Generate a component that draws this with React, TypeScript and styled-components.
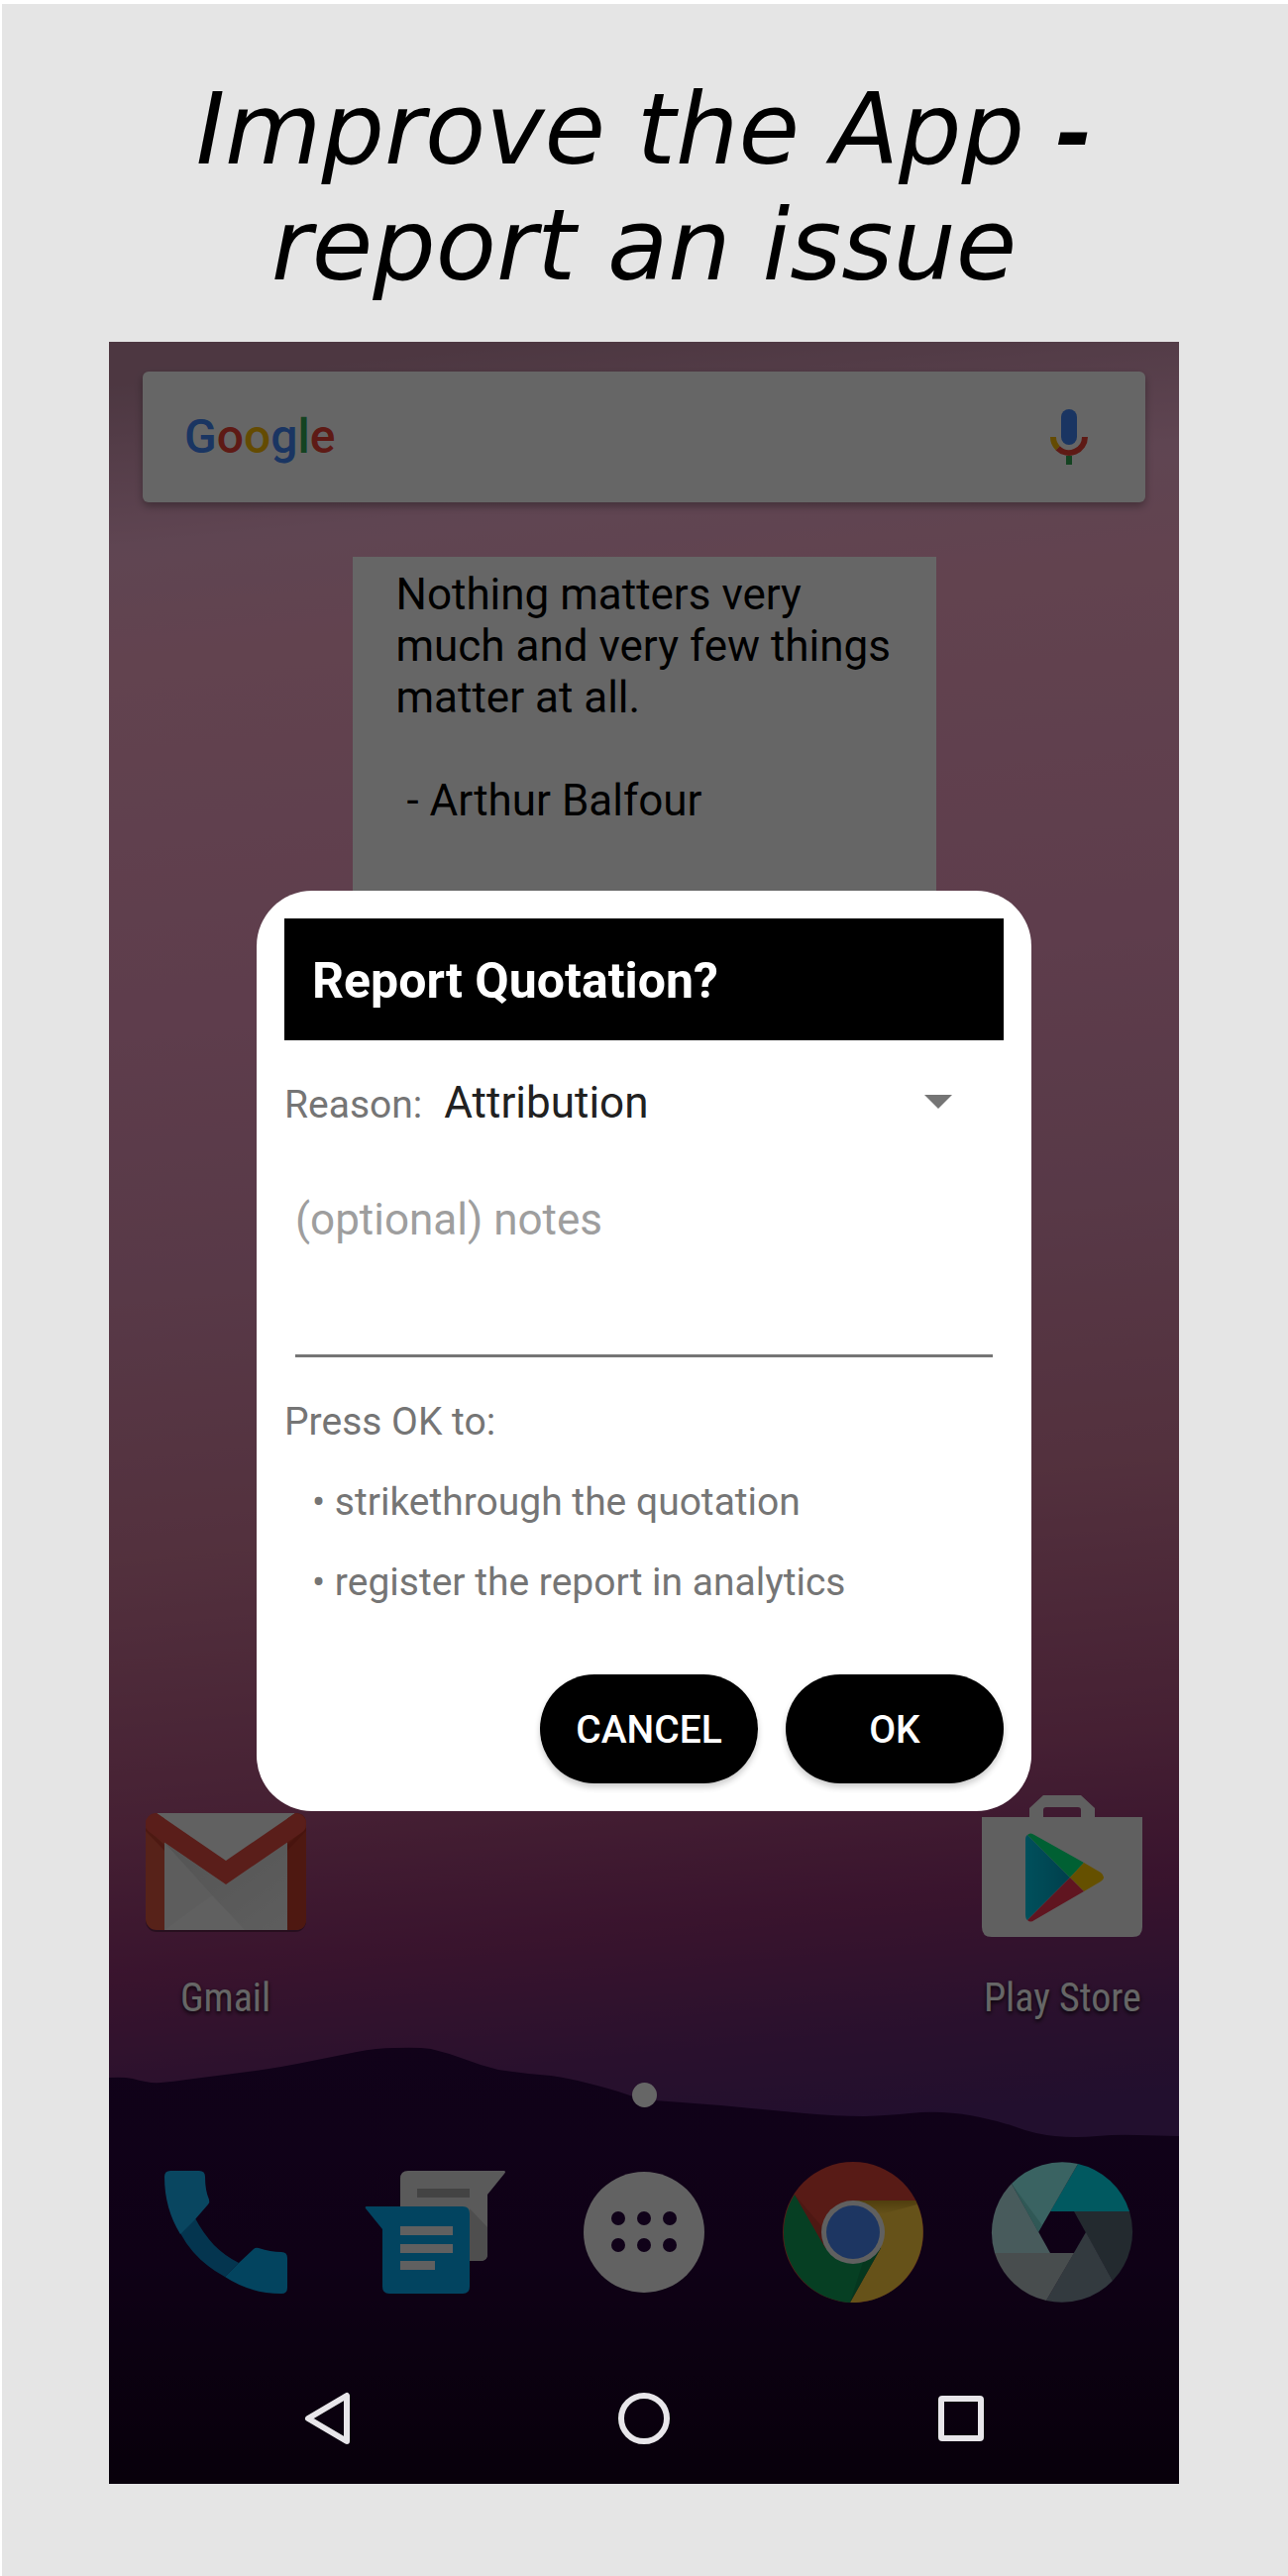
import React, { useState } from "react";
import styled, { createGlobalStyle } from "styled-components";

const GlobalStyle = createGlobalStyle`
  *, *::before, *::after { box-sizing: border-box; }
  body { margin: 0; font-family: Roboto, "Liberation Sans", sans-serif; background: #fff; }
  h1, h2, p, ul, figure, blockquote { margin: 0; padding: 0; }
  button, select, textarea { font: inherit; }
`;

const Page = styled.main`
  min-height: 100vh;
  padding: 68px 110px 93px 108px;
  border-top: 4px solid #fff;
  border-left: 2px solid #fff;
  background: #e5e5e5;
`;

const Headline = styled.h1`
  margin-bottom: 39px;
  color: #000;
  font: italic 400 100px/117px "DejaVu Sans", sans-serif;
  text-align: center;
`;

const Dash = styled.span`
  font-size: 88px;
  font-weight: 700;
  line-height: 1;
`;

const Phone = styled.section`
  position: relative;
  display: flex;
  flex-direction: column;
  width: 100%;
  aspect-ratio: 540 / 1081;
  overflow: hidden;
  background: #1b0426;
`;

const Wallpaper = styled.svg`
  position: absolute;
  inset: 0;
  width: 100%;
  height: 100%;
`;

const Home = styled.div`
  position: relative;
  flex: 1;
  display: flex;
  flex-direction: column;
  align-items: center;
  padding-top: 30px;
`;

const SearchBar = styled.div`
  align-self: stretch;
  display: flex;
  align-items: center;
  justify-content: space-between;
  height: 132px;
  margin: 0 34px;
  padding: 0 57px 0 42px;
  border-radius: 6px;
  background: #fff;
  box-shadow: 0 4px 8px rgba(0, 0, 0, 0.3);
`;

const BareButton = styled.button`
  display: flex;
  align-items: center;
  justify-content: center;
  padding: 0;
  border: 0;
  background: none;
  color: inherit;
  cursor: pointer;
`;

const Wordmark = styled(BareButton)`
  font-size: 48px;
  font-weight: 500;
  line-height: 56px;
`;

const Letter = styled.span<{ $color: string }>`
  color: ${(p) => p.$color};
`;

const QuoteWidget = styled.blockquote`
  width: 100%;
  max-width: 589px;
  min-height: 500px;
  margin-top: 55px;
  padding: 12px 44px;
  background: #fff;
  color: #000;
  font-size: 44px;
  line-height: 52px;
  white-space: pre-wrap;
`;

const AppRow = styled.div`
  align-self: stretch;
  display: grid;
  grid-template-columns: repeat(5, 1fr);
  justify-items: center;
  padding: 0 12px;
`;

const Shortcuts = styled(AppRow)`
  margin-top: auto;
`;

const Dock = styled(AppRow)`
  margin: 51px 0 53px;
`;

const Launcher = styled(BareButton)<{ $column?: number }>`
  flex-direction: column;
  gap: 37px;
  grid-column: ${(p) => p.$column ?? "auto"};
`;

const AppLabel = styled.span`
  color: #fff;
  font: 400 40px/48px "Roboto Condensed", "Liberation Sans Narrow", Roboto, sans-serif;
  white-space: nowrap;
  text-shadow: 0 2px 4px rgba(0, 0, 0, 0.9);
`;

const PageDot = styled.span`
  width: 25px;
  height: 25px;
  margin-top: 61px;
  border-radius: 50%;
  background: #fff;
`;

const NavBar = styled.nav`
  position: relative;
  z-index: 2;
  display: grid;
  grid-template-columns: repeat(3, 1fr);
  height: 126px;
  padding: 0 60px 6px;
`;

const Scrim = styled.div`
  position: absolute;
  inset: 0;
  z-index: 1;
  display: flex;
  align-items: center;
  justify-content: center;
  padding-bottom: 126px;
  background: rgba(0, 0, 0, 0.6);
`;

const Dialog = styled.form`
  width: 100%;
  max-width: 782px;
  padding: 28px;
  border-radius: 56px;
  background: #fff;
  color: #757575;
  font-size: 39px;
  line-height: 46px;
`;

const DialogTitle = styled.h2`
  padding: 34px 28px 30px;
  background: #000;
  color: #fff;
  font-size: 50px;
  font-weight: 700;
  line-height: 59px;
`;

const ReasonRow = styled.div`
  display: flex;
  align-items: baseline;
  gap: 22px;
  margin-top: 37px;
`;

const SelectBox = styled.div`
  position: relative;
  flex: 1;
`;

const ReasonSelect = styled.select`
  display: block;
  width: 100%;
  height: 52px;
  padding: 0;
  border: 0;
  appearance: none;
  background: none;
  color: #212121;
  font-size: 44px;
  line-height: 52px;
`;

const Caret = styled.svg`
  position: absolute;
  top: 18px;
  right: 52px;
  pointer-events: none;
`;

const NotesField = styled.div`
  display: flex;
  margin: 66px 11px 0;
`;

const Notes = styled.textarea`
  flex: 1;
  height: 165px;
  padding: 0;
  border: 0;
  border-bottom: 3px solid #757575;
  outline: 0;
  resize: none;
  background: none;
  color: #212121;
  font-size: 44px;
  line-height: 52px;
  &::placeholder { color: #9e9e9e; opacity: 1; }
`;

const Intro = styled.p`
  margin-top: 42px;
`;

const Effects = styled.ul`
  && { padding-left: 28px; }
  list-style: none;
`;

const Effect = styled.li`
  margin-top: 35px;
`;

const Actions = styled.div`
  display: flex;
  justify-content: flex-end;
  gap: 28px;
  margin-top: 70px;
`;

const Action = styled.button`
  width: 220px;
  height: 110px;
  padding: 2px 0 0;
  border: 0;
  border-radius: 55px;
  background: #000;
  color: #fff;
  font-weight: 500;
  box-shadow: 0 4px 6px rgba(0, 0, 0, 0.2);
  cursor: pointer;
`;

function Scenery() {
  return (
    <Wallpaper viewBox="0 0 1080 2162" preserveAspectRatio="none" aria-hidden="true">
      <defs>
        <linearGradient id="sky" gradientUnits="userSpaceOnUse" x1="450" y1="0" x2="630" y2="1810">
          <stop offset="0" stopColor="#c08ba4" />
          <stop offset="0.09" stopColor="#eeadcd" />
          <stop offset="0.15" stopColor="#f5a8c6" />
          <stop offset="0.35" stopColor="#eb99be" />
          <stop offset="0.5" stopColor="#dc8fb2" />
          <stop offset="0.65" stopColor="#cf7a9a" />
          <stop offset="0.8" stopColor="#ad5080" />
          <stop offset="0.88" stopColor="#8f3272" />
          <stop offset="0.95" stopColor="#682a70" />
          <stop offset="1" stopColor="#552673" />
        </linearGradient>
        <linearGradient id="hill" x1="0" y1="0" x2="0" y2="1">
          <stop offset="0" stopColor="#2b0540" />
          <stop offset="0.5" stopColor="#260438" />
          <stop offset="0.75" stopColor="#1c0328" />
          <stop offset="1" stopColor="#14001c" />
        </linearGradient>
      </defs>
      <rect width="1080" height="2162" fill="url(#sky)" />
      <path
        fill="url(#hill)"
        d="M0 1752Q14 1751 24 1753Q40 1758 52 1757Q66 1756 78 1754L148 1745Q176 1741 200 1736L250 1726Q270 1722 288 1722Q312 1721 325 1723Q342 1727 358 1733Q376 1740 393 1744Q420 1748 446 1750Q466 1753 481 1757Q506 1763 523 1769Q536 1774 551 1775L618 1780L702 1788Q735 1791 762 1791Q788 1790 808 1788Q826 1786 841 1787Q862 1788 879 1792Q898 1796 913 1801Q934 1809 955 1811Q976 1813 997 1811Q1018 1809 1039 1810L1080 1811V2162H0Z"
      />
    </Wallpaper>
  );
}

function MicIcon() {
  return (
    <svg width="40" height="56" viewBox="0 0 40 56" fill="none" aria-hidden="true">
      <rect x="12" y="0" width="16" height="36" rx="8" fill="#4285f4" />
      <path d="M4 28A16 16 0 0 0 8.700 39.300" stroke="#fbbc05" strokeWidth="6" />
      <path d="M8.700 39.300A16 16 0 0 0 36 28" stroke="#ea4335" strokeWidth="6" />
      <path d="M20 47V56" stroke="#34a853" strokeWidth="6" />
    </svg>
  );
}

function GmailIcon() {
  return (
    <svg width="162" height="144" viewBox="0 0 162 144" aria-hidden="true">
      <defs>
        <linearGradient id="fold" x1="0" y1="0" x2="1" y2="1">
          <stop offset="0" stopColor="#d2d2d2" />
          <stop offset="1" stopColor="#eaeaea" />
        </linearGradient>
      </defs>
      <rect x="0" y="20" width="162" height="118" rx="11" fill="#000" opacity="0.35" />
      <rect x="0" y="18" width="162" height="118" rx="11" fill="#d9553f" />
      <path d="M143 18H151Q162 18 162 29V125Q162 136 151 136H143Z" fill="#c33e2b" />
      <rect x="19" y="18" width="124" height="118" fill="#ebebeb" />
      <path d="M11 18H151L81 66Z" fill="#f2f2f2" />
      <path d="M19 48L81 90L143 48V136H100L67 101Z" fill="url(#fold)" />
      <path d="M19 48V136L67 101Z" fill="#e8e8e8" />
      <path d="M19 136L67 101L100 136Z" fill="#efefef" />
      <path d="M0 33L19 50V56L0 36ZM162 33L143 50V56L162 36Z" fill="#a82a1e" opacity="0.5" />
      <path d="M11 18L81 66L151 18Q162 19 162 29Q162 35 157 38L81 90L5 38Q0 35 0 29Q0 19 11 18Z" fill="#e14b41" />
    </svg>
  );
}

function PlayStoreIcon() {
  return (
    <svg width="162" height="144" viewBox="0 0 162 144" aria-hidden="true">
      <defs>
        <linearGradient id="playBlue" x1="0" y1="0.500" x2="1" y2="0.500">
          <stop offset="0" stopColor="#00c8e6" />
          <stop offset="1" stopColor="#009fbe" />
        </linearGradient>
      </defs>
      <path
        d="M48 22V13L62 0H100L114 13V22H162V133Q162 143 152 143H10Q0 143 0 133V22ZM62 22H100V15Q100 12 97 12H65Q62 12 62 15Z"
        fill="#f0f0f0"
        fillRule="evenodd"
      />
      <path d="M46 40Q44 41 44 45V120Q44 125 46 126L89 83Z" fill="url(#playBlue)" />
      <path d="M46 40Q49 37 53 40L103 68L89 83Z" fill="#00f080" />
      <path d="M103 68L120 78Q126 83 120 87L103 97L89 83Z" fill="#fcc800" />
      <path d="M46 126Q49 129 53 126L103 97L89 83Z" fill="#f03550" />
    </svg>
  );
}

function PhoneIcon() {
  return (
    <svg width="150" height="150" viewBox="0 0 150 150" aria-hidden="true">
      <path d="M44 61Q52 76 63 88Q74 99 88 106L74 120Q44 104 29 76Z" fill="#0c86c6" />
      <path d="M13 19Q13 13 19 13H48Q54 13 54 19Q54 33 58 42Q59 45 57 47L44 62L29 77Q13 51 13 19Z" fill="#18aef0" />
      <path d="M103 92Q105 90 108 91Q120 95 131 95Q137 95 137 101V131Q137 137 131 137Q100 137 74 120L88 106Z" fill="#08abee" />
    </svg>
  );
}

function MessagesIcon() {
  return (
    <svg width="150" height="150" viewBox="0 0 150 150" aria-hidden="true">
      <path d="M40 21Q40 13 48 13H145Q147 14 145 16L128 37V97Q128 104 121 104H40Z" fill="#e2e2e2" />
      <path d="M110 51L128 70V97Q128 104 121 104H110Z" fill="#c4c4c4" />
      <path d="M57 31H110V40H57Z" fill="#a8a8a8" />
      <path d="M6 49H103Q110 49 110 56V130Q110 137 103 137H29Q22 137 22 130V72L5 51Q4 49 6 49Z" fill="#06abf0" />
      <path d="M40 69H93V78H40ZM40 87H93V96H40ZM40 104H75V113H40Z" fill="#efefef" />
    </svg>
  );
}

function AllAppsIcon() {
  return (
    <svg width="150" height="150" viewBox="0 0 150 150" aria-hidden="true">
      <circle cx="75" cy="75" r="61" fill="#f4f4f4" />
      {[49, 75, 101].map((x) =>
        [61, 88].map((y) => <circle key={`${x}-${y}`} cx={x} cy={y} r="7" fill="#2a0540" />)
      )}
    </svg>
  );
}

function ChromeIcon() {
  return (
    <svg width="150" height="150" viewBox="-75 -75 150 150" aria-hidden="true">
      <defs>
        <linearGradient id="redShade" x1="0" y1="0" x2="0" y2="1">
          <stop offset="0" stopColor="#a07a10" stopOpacity="0.6" />
          <stop offset="1" stopColor="#a07a10" stopOpacity="0" />
        </linearGradient>
      </defs>
      <circle r="71" fill="#db4437" />
      <path d="M0 -32H63A71 71 0 0 1 -3 71L28 16Z" fill="#ffcd40" />
      <path d="M-59 -38A71 71 0 0 0 -3 71L28 16L-28 16Z" fill="#0f9d58" />
      <path d="M0 -32H63L65 -28L28 -18Z" fill="url(#redShade)" />
      <path d="M-59 -38L-28 16L-30 -4Z" fill="#8c3026" opacity="0.3" />
      <path d="M28 16L-3 71L10 30Z" fill="#0a6b3c" opacity="0.4" />
      <circle r="32" fill="#f1f1f1" />
      <circle r="27" fill="#4a88f5" />
    </svg>
  );
}

function CameraIcon() {
  return (
    <svg width="150" height="150" viewBox="-75 -75 150 150" aria-hidden="true">
      <path d="M16 -69A71 71 0 0 1 68 -21H-12Z" fill="#04dff0" />
      <path d="M68 -21A71 71 0 0 1 51 49L12 -21Z" fill="#576a76" />
      <path d="M51 49A71 71 0 0 1 -16 69L24 0Z" fill="#7f919f" />
      <path d="M-16 69A71 71 0 0 1 -68 21H12Z" fill="#b5c0c2" />
      <path d="M-68 21A71 71 0 0 1 -51 -49L-12 21Z" fill="#b4e3e6" />
      <path d="M-51 -49A71 71 0 0 1 16 -69L-24 0Z" fill="#92f8f4" />
      <path d="M-51 -49L-24 0L-20 -7Z" fill="#5ebfbc" opacity="0.5" />
    </svg>
  );
}

const NavIcon = styled.svg.attrs({ width: 60, height: 60, viewBox: "0 0 60 60", "aria-hidden": true })`
  fill: none;
  stroke: #e8e6ea;
  stroke-width: 6px;
  stroke-linejoin: round;
`;

const wordmark: [string, string][] = [
  ["G", "#4285f4"],
  ["o", "#ea4335"],
  ["o", "#fbbc05"],
  ["g", "#4285f4"],
  ["l", "#34a853"],
  ["e", "#ea4335"],
];

const dockApps = [
  { name: "Phone", Icon: PhoneIcon },
  { name: "Messages", Icon: MessagesIcon },
  { name: "All apps", Icon: AllAppsIcon },
  { name: "Chrome", Icon: ChromeIcon },
  { name: "Camera", Icon: CameraIcon },
];

const effects = ["strikethrough the quotation", "register the report in analytics"];

export default function App() {
  const [notes, setNotes] = useState("");

  return (
    <>
      <GlobalStyle />
      <Page>
        <Headline>
          Improve the App <Dash>-</Dash>
          <br />
          report an issue
        </Headline>
        <Phone>
          <Scenery />
          <Home>
            <SearchBar>
              <Wordmark type="button">
                {wordmark.map(([letter, color], i) => (
                  <Letter key={i} $color={color}>{letter}</Letter>
                ))}
              </Wordmark>
              <BareButton type="button" aria-label="Voice search">
                <MicIcon />
              </BareButton>
            </SearchBar>
            <QuoteWidget>
              {"Nothing matters very much and very few things matter at all.\n\n - Arthur Balfour"}
            </QuoteWidget>
            <Shortcuts>
              <Launcher type="button" $column={1}>
                <GmailIcon />
                <AppLabel>Gmail</AppLabel>
              </Launcher>
              <Launcher type="button" $column={5}>
                <PlayStoreIcon />
                <AppLabel>Play Store</AppLabel>
              </Launcher>
            </Shortcuts>
            <PageDot />
            <Dock>
              {dockApps.map(({ name, Icon }) => (
                <Launcher key={name} type="button" aria-label={name}>
                  <Icon />
                </Launcher>
              ))}
            </Dock>
          </Home>
          <NavBar>
            <BareButton type="button" aria-label="Back">
              <NavIcon><path d="M50 7V53L11 30Z" /></NavIcon>
            </BareButton>
            <BareButton type="button" aria-label="Home">
              <NavIcon><circle cx="30" cy="30" r="23" /></NavIcon>
            </BareButton>
            <BareButton type="button" aria-label="Recent apps">
              <NavIcon><rect x="10" y="10" width="40" height="40" rx="1" /></NavIcon>
            </BareButton>
          </NavBar>
          <Scrim>
            <Dialog role="dialog" aria-labelledby="report-title" onSubmit={(e) => e.preventDefault()}>
              <DialogTitle id="report-title">Report Quotation?</DialogTitle>
              <ReasonRow>
                <label htmlFor="reason">Reason:</label>
                <SelectBox>
                  <ReasonSelect id="reason" defaultValue="Attribution">
                    <option>Attribution</option>
                  </ReasonSelect>
                  <Caret width="28" height="14" viewBox="0 0 28 14" aria-hidden="true">
                    <path d="M0 0H28L14 14Z" fill="#757575" />
                  </Caret>
                </SelectBox>
              </ReasonRow>
              <NotesField>
                <Notes
                  aria-label="Notes"
                  placeholder="(optional) notes"
                  value={notes}
                  onChange={(e) => setNotes(e.target.value)}
                />
              </NotesField>
              <Intro>Press OK to:</Intro>
              <Effects>
                {effects.map((text) => (
                  <Effect key={text}>• {text}</Effect>
                ))}
              </Effects>
              <Actions>
                <Action type="button">CANCEL</Action>
                <Action type="submit">OK</Action>
              </Actions>
            </Dialog>
          </Scrim>
        </Phone>
      </Page>
    </>
  );
}
